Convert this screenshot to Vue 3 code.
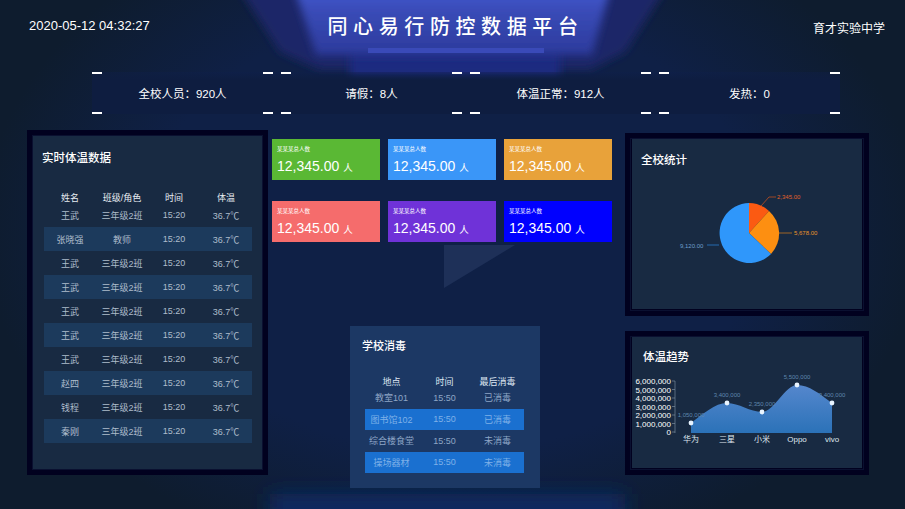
<template>
  <div class="screen">
    <svg class="bg" width="905" height="509" viewBox="0 0 905 509">
      <defs>
        <linearGradient id="headGlow" x1="0" y1="0" x2="0" y2="1">
          <stop offset="0" stop-color="#4259cf" />
          <stop offset="0.3" stop-color="#3a4cb8" />
          <stop offset="1" stop-color="#2c3a9c" />
        </linearGradient>
        <filter id="soft" x="-20%" y="-40%" width="140%" height="180%">
          <feGaussianBlur stdDeviation="4" />
        </filter>
        <filter id="softer" x="-20%" y="-60%" width="140%" height="220%">
          <feGaussianBlur stdDeviation="10" />
        </filter>
      </defs>
      <polygon points="240,-10 665,-10 625,52 590,70 320,70 280,52" fill="#1a2868" filter="url(#soft)" />
      <rect x="350" y="52" width="210" height="26" fill="#1e2a80" filter="url(#soft)" />
      <polygon points="295,-10 610,-10 592,55 316,55" fill="url(#headGlow)" filter="url(#soft)" />
      <rect x="368" y="48" width="176" height="5" fill="#3a4ab8" />
      <polygon points="444,245 515,245 444,288" fill="#1e3058" />
      <rect x="270" y="494" width="355" height="30" fill="#0c2a64" filter="url(#softer)" />
    </svg>

    <header class="head">
      <span class="clock">2020-05-12 04:32:27</span>
      <h1 class="title">同心易行防控数据平台</h1>
      <span class="school">育才实验中学</span>
    </header>

    <section class="stats">
      <div v-for="s in stats" :key="s" class="stat">
        <i class="mark tl"></i><i class="mark tr"></i><i class="mark bl"></i><i class="mark br"></i>
        {{ s }}
      </div>
    </section>

    <main class="board">
      <div class="panel left">
        <h2 class="panel-title">实时体温数据</h2>
        <table class="temp">
          <thead>
            <tr><th>姓名</th><th>班级/角色</th><th>时间</th><th>体温</th></tr>
          </thead>
          <tbody>
            <tr v-for="(r, i) in tempRows" :key="i">
              <td>{{ r[0] }}</td><td>{{ r[1] }}</td><td>15:20</td><td>36.7℃</td>
            </tr>
          </tbody>
        </table>
      </div>

      <div class="center">
        <div class="cards">
          <div v-for="c in cards" :key="c" class="card" :class="c">
            <div class="card-label">某某某总人数</div>
            <div class="card-value">12,345.00 <span>人</span></div>
          </div>
        </div>
        <div class="clean">
          <h2 class="clean-title">学校消毒</h2>
          <table class="clean-table">
            <thead>
              <tr><th>地点</th><th>时间</th><th>最后消毒</th></tr>
            </thead>
            <tbody>
              <tr v-for="r in cleanRows" :key="r[0]">
                <td>{{ r[0] }}</td><td>15:50</td><td>{{ r[1] }}</td>
              </tr>
            </tbody>
          </table>
        </div>
      </div>

      <div class="right">
        <div class="panel pie">
          <h2 class="panel-title">全校统计</h2>
          <svg class="chart" width="234" height="166" viewBox="632 139 234 166">
            <path d="M749 233 L749 203 A30 30 0 0 1 769 211 Z" fill="#fb5a12" />
            <path d="M749 233 L769 211 A30 30 0 0 1 771 254 Z" fill="#fd8f11" />
            <path d="M749 233 L771 254 A30 30 0 1 1 749 203 Z" fill="#2f97fb" />
            <polyline points="761,206 769,197 776,197" fill="none" stroke="#fb5a12" stroke-width="0.6" />
            <polyline points="779,233 792,233" fill="none" stroke="#fd8f11" stroke-width="0.6" />
            <polyline points="719,245 707,245" fill="none" stroke="#2f97fb" stroke-width="0.6" />
            <text x="777" y="199" class="pie-label" fill="#e0602a">2,345.00</text>
            <text x="794" y="235" class="pie-label" fill="#e8932a">5,678.00</text>
            <text x="680" y="248" class="pie-label" fill="#6f9fcc">9,120.00</text>
          </svg>
        </div>

        <div class="panel trend">
          <h2 class="panel-title">体温趋势</h2>
          <svg class="chart" width="234" height="127" viewBox="632 336 234 127">
            <defs>
              <linearGradient id="area" x1="0" y1="0" x2="0" y2="1">
                <stop offset="0" stop-color="#5587cd" />
                <stop offset="1" stop-color="#2b72b8" />
              </linearGradient>
            </defs>
            <text v-for="(t, i) in yTicks" :key="t" x="671" :y="384 + i * 8.5" class="tick" text-anchor="end">{{ t }}</text>
            <line x1="675" y1="381" x2="675" y2="433" stroke="#8899aa" stroke-width="0.6" />
            <line v-for="(t, i) in yTicks" :key="'m' + t" x1="672" x2="675" :y1="381 + i * 8.5" :y2="381 + i * 8.5" stroke="#8899aa" stroke-width="0.6" />
            <path d="M691 423 C703 414 715 403 727 403 C739 403 750 412 762 412 C774 412 785 385 797 385 C809 385 820 394 832 403 L832 433 L691 433 Z" fill="url(#area)" />
            <g v-for="p in points" :key="p.name">
              <circle :cx="p.x" :cy="p.y" r="2.4" fill="#e8f4ff" />
              <text :x="p.x" :y="p.y - 6" class="point-label" text-anchor="middle">{{ p.value }}</text>
              <text :x="p.x" y="442" class="x-label" text-anchor="middle">{{ p.name }}</text>
            </g>
          </svg>
        </div>
      </div>
    </main>
  </div>
</template>

<script setup>
const stats = ["全校人员：920人", "请假：8人", "体温正常：912人", "发热：0"];

const tempRows = [
  ["王武", "三年级2班"],
  ["张晓强", "教师"],
  ["王武", "三年级2班"],
  ["王武", "三年级2班"],
  ["王武", "三年级2班"],
  ["王武", "三年级2班"],
  ["王武", "三年级2班"],
  ["赵四", "三年级2班"],
  ["钱程", "三年级2班"],
  ["秦刚", "三年级2班"],
];

const cards = ["green", "blue", "orange", "coral", "purple", "pure"];

const cleanRows = [
  ["教室101", "已消毒"],
  ["图书馆102", "已消毒"],
  ["综合楼食堂", "未消毒"],
  ["操场器材", "未消毒"],
];

const yTicks = ["6,000,000", "5,000,000", "4,000,000", "3,000,000", "2,000,000", "1,000,000", "0"];

const points = [
  { name: "华为", x: 691, y: 423, value: "1,050,000" },
  { name: "三星", x: 727, y: 403, value: "3,400,000" },
  { name: "小米", x: 762, y: 412, value: "2,350,000" },
  { name: "Oppo", x: 797, y: 385, value: "5,500,000" },
  { name: "vivo", x: 832, y: 403, value: "3,400,000" },
];
</script>

<style>
html,
body {
  margin: 0;
  background: #0e1c2e;
}
</style>

<style scoped>
.screen {
  position: relative;
  width: 905px;
  height: 509px;
  overflow: hidden;
  color: #fff;
  font-family: "Liberation Sans", "Noto Sans CJK SC", sans-serif;
  background: radial-gradient(ellipse 470px 340px at 50% 45%, #0f2046 0%, #0f2046 65%, #0e1c2e 100%);
}

.bg {
  position: absolute;
  left: 0;
  top: 0;
}

.head {
  position: relative;
  height: 55px;
  display: flex;
  justify-content: space-between;
  align-items: center;
  padding: 0 20px 4px 29px;
  box-sizing: border-box;
}

.clock {
  font-size: 13px;
}

.title {
  position: absolute;
  left: 6px;
  right: 0;
  top: 12px;
  margin: 0;
  text-align: center;
  font-size: 20px;
  line-height: 30px;
  font-weight: 500;
  letter-spacing: 5.6px;
}

.school {
  font-size: 12px;
  padding-top: 4px;
}

.stats {
  position: relative;
  display: flex;
  gap: 8px;
  margin: 17px 65px 0 92px;
  height: 42px;
  background: linear-gradient(180deg, rgba(14, 31, 76, 0.35) 0%, #0e1d40 20%, #0e1d40 100%);
}

.stat {
  position: relative;
  flex: 1;
  display: flex;
  align-items: center;
  justify-content: center;
  font-size: 11.5px;
}

.mark {
  position: absolute;
  width: 10px;
  height: 2px;
  background: #fff;
}

.tl { left: 0; top: 0; }
.tr { right: 0; top: 0; }
.bl { left: 0; bottom: 0; }
.br { right: 0; bottom: 0; }

.board {
  position: relative;
  display: grid;
  grid-template-columns: 241px 340px 253px;
  column-gap: 4px;
  padding: 16px 0 0 27px;
}

.panel {
  box-sizing: border-box;
  border: 5px solid #01011f;
  outline: 1px solid #0a1030;
  outline-offset: -6px;
  background: #182a42;
}

.panel-title {
  margin: 0;
  font-size: 11.5px;
  line-height: 16px;
  font-weight: 500;
}

.left {
  height: 345px;
  padding: 15px 10px 0 10px;
}

.temp {
  width: 208px;
  margin: 27px 0 0 2px;
  border-collapse: collapse;
  table-layout: fixed;
  font-size: 9px;
  text-align: center;
}

.temp th {
  height: 10px;
  padding: 0;
  line-height: 10px;
  font-weight: 400;
  color: #e8edf3;
}

.temp td {
  height: 24px;
  padding: 0;
  color: #aebdcc;
}

.temp tbody tr:nth-child(even) td {
  background: #1c3a5c;
}

.center {
  padding: 9px 0 0 0;
}

.cards {
  display: grid;
  grid-template-columns: repeat(3, 108px);
  grid-auto-rows: 41px;
  gap: 21px 8px;
}

.card {
  box-sizing: border-box;
  padding: 6px 0 0 5px;
}

.card-label {
  font-size: 5.5px;
  line-height: 8px;
}

.card-value {
  margin-top: 4px;
  font-size: 14px;
  line-height: 18px;
}

.card-value span {
  font-size: 9.5px;
}

.green { background: #5ab834; }
.blue { background: #3a96f8; }
.orange { background: #e8a23a; }
.coral { background: #f56c6c; }
.purple { background: #6f32d8; }
.pure { background: #0000ff; }

.clean {
  box-sizing: border-box;
  width: 190px;
  height: 162px;
  margin: 84px 0 0 78px;
  padding: 13px 15px 0 12px;
  background: #1c3864;
}

.clean-title {
  margin: 0;
  font-size: 11px;
  line-height: 14px;
  font-weight: 500;
}

.clean-table {
  width: 159px;
  margin: 25px 0 0 3px;
  border-collapse: collapse;
  table-layout: fixed;
  font-size: 9px;
  text-align: center;
}

.clean-table th {
  height: 9px;
  padding: 0;
  line-height: 9px;
  font-weight: 400;
  color: #dfe7f2;
}

.clean-table td {
  height: 21.5px;
  padding: 0;
  color: #8ea6c6;
}

.clean-table tbody tr:nth-child(even) td {
  background: #1a70d0;
  color: #7fb0e8;
}

.right {
  display: flex;
  flex-direction: column;
  gap: 15px;
  margin: 3px 0 0 9px;
}

.pie,
.trend {
  position: relative;
  border-width: 6px 7px 7px 7px;
}

.pie {
  height: 183px;
  padding: 13px 0 0 9px;
}

.trend {
  height: 144px;
  padding: 12px 0 0 11px;
}

.chart {
  position: absolute;
  overflow: visible;
}

.pie .chart {
  left: 0;
  top: 0;
}

.trend .chart {
  left: 0;
  top: -1px;
}

.pie-label {
  font-size: 6px;
}

.tick {
  font-size: 8px;
  fill: #fff;
}

.point-label {
  font-size: 6px;
  fill: #5f86ad;
}

.x-label {
  font-size: 8px;
  fill: #dfe7ef;
}
</style>
